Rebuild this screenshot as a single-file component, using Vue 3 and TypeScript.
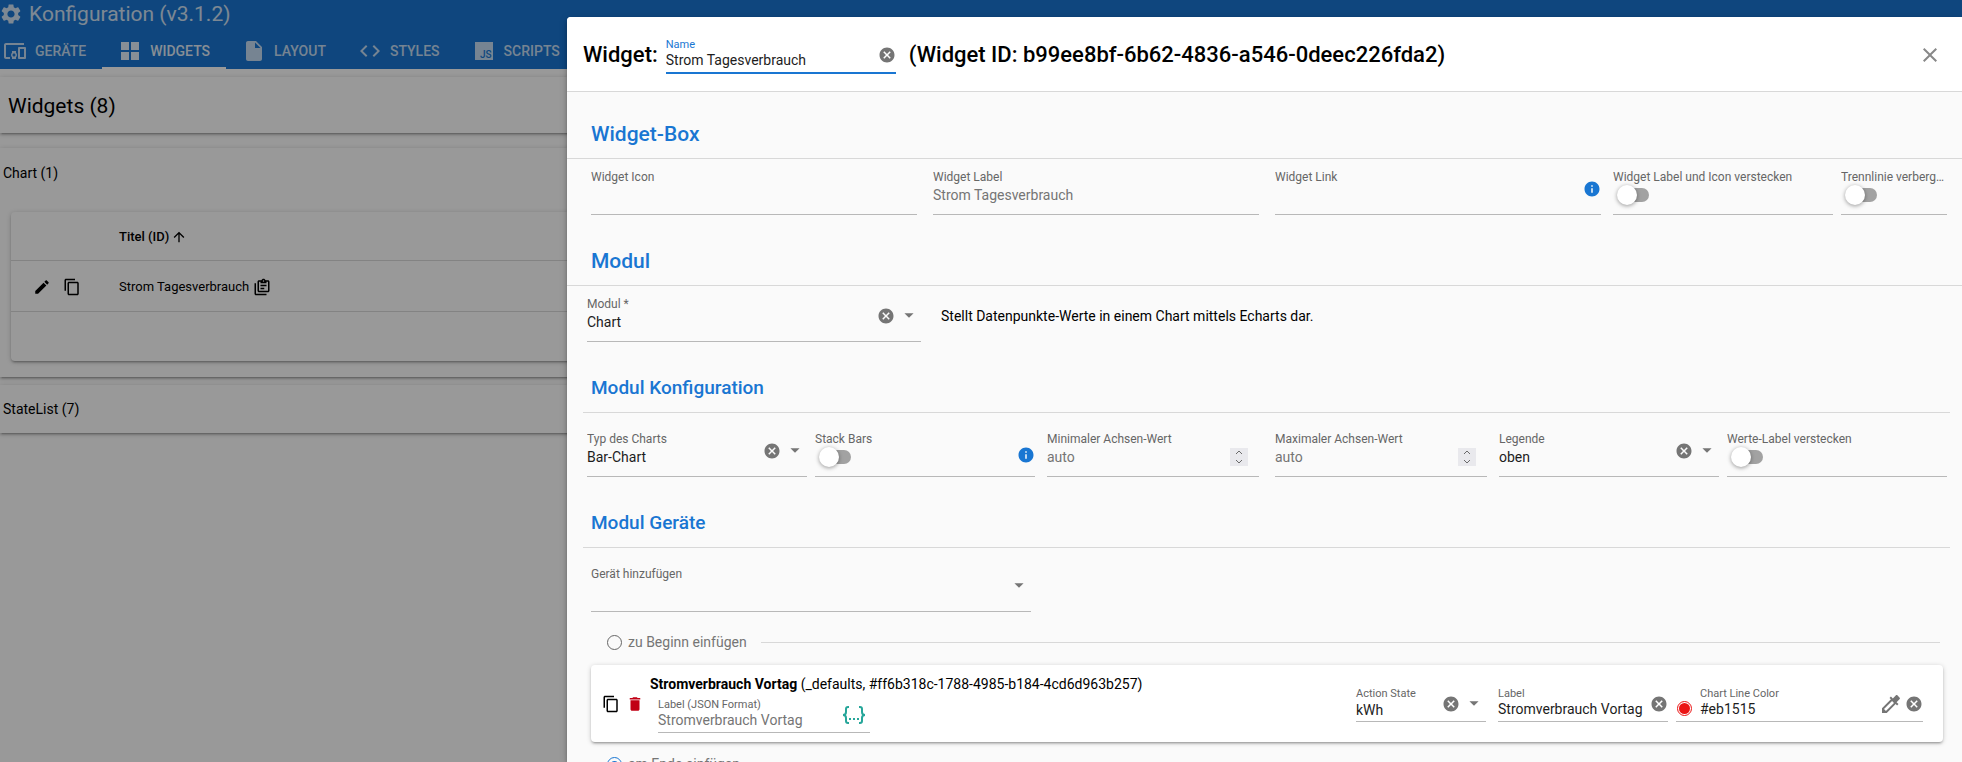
<script setup lang="ts">
import { ref } from 'vue'

const icons = {
  cog: 'M19.14 12.94c.04-.3.06-.61.06-.94 0-.32-.02-.64-.07-.94l2.03-1.58c.18-.14.23-.41.12-.61l-1.92-3.32c-.12-.22-.37-.29-.59-.22l-2.39.96c-.5-.38-1.03-.7-1.62-.94l-.36-2.54c-.04-.24-.24-.41-.48-.41h-3.84c-.24 0-.43.17-.47.41l-.36 2.54c-.59.24-1.13.57-1.62.94l-2.39-.96c-.22-.08-.47 0-.59.22L2.74 8.87c-.12.21-.08.47.12.61l2.03 1.58c-.05.3-.09.63-.09.94s.02.64.07.94l-2.03 1.58c-.18.14-.23.41-.12.61l1.92 3.32c.12.22.37.29.59.22l2.39-.96c.5.38 1.03.7 1.62.94l.36 2.54c.05.24.24.41.48.41h3.84c.24 0 .44-.17.47-.41l.36-2.54c.59-.24 1.13-.56 1.62-.94l2.39.96c.22.08.47 0 .59-.22l1.92-3.32c.12-.22.07-.47-.12-.61l-2.01-1.58zM12 15.6c-1.98 0-3.6-1.62-3.6-3.6s1.62-3.6 3.6-3.6 3.6 1.62 3.6 3.6-1.62 3.6-3.6 3.6z',
  devices: 'M3 6h18V4H3c-1.1 0-2 .9-2 2v12c0 1.1.9 2 2 2h4v-2H3V6zm10 6H9v1.78c-.61.55-1 1.33-1 2.22s.39 1.67 1 2.22V20h4v-1.78c.61-.55 1-1.34 1-2.22s-.39-1.67-1-2.22V12zm-2 5.5c-.83 0-1.5-.67-1.5-1.5s.67-1.5 1.5-1.5 1.5.67 1.5 1.5-.67 1.5-1.5 1.5zM22 8h-6c-.5 0-1 .5-1 1v10c0 .5.5 1 1 1h6c.5 0 1-.5 1-1V9c0-.5-.5-1-1-1zm-1 10h-4v-8h4v8z',
  grid: 'M3 3h8v8H3zm10 0h8v8h-8zM3 13h8v8H3zm10 0h8v8h-8z',
  file: 'M6 2c-1.1 0-2 .9-2 2v16c0 1.1.9 2 2 2h12c1.1 0 2-.9 2-2V8l-6-6zm7 7V3.5L18.5 9z',
  code: 'M9.4 16.6L4.8 12l4.6-4.6L8 6l-6 6 6 6zm5.2 0l4.6-4.6-4.6-4.6L16 6l6 6-6 6z',
  edit: 'M3 17.25V21h3.75L17.81 9.94l-3.75-3.75zM20.71 7.04c.39-.39.39-1.02 0-1.41l-2.34-2.34c-.39-.39-1.02-.39-1.41 0l-1.83 1.83 3.75 3.75z',
  copy: 'M16 1H4c-1.1 0-2 .9-2 2v14h2V3h12zm3 4H8c-1.1 0-2 .9-2 2v14c0 1.1.9 2 2 2h11c1.1 0 2-.9 2-2V7c0-1.1-.9-2-2-2m0 16H8V7h11z',
  trash: 'M6 19c0 1.1.9 2 2 2h8c1.1 0 2-.9 2-2V7H6zM19 4h-3.5l-1-1h-5l-1 1H5v2h14z',
  cancel: 'M12 2C6.47 2 2 6.47 2 12s4.47 10 10 10 10-4.47 10-10S17.53 2 12 2m5 13.59L15.59 17 12 13.41 8.41 17 7 15.59 10.59 12 7 8.41 8.41 7 12 10.59 15.59 7 17 8.41 13.41 12z',
  info: 'M12 2C6.48 2 2 6.48 2 12s4.48 10 10 10 10-4.48 10-10S17.52 2 12 2m1 15h-2v-6h2zm0-8h-2V7h2z',
  drop: 'M7 9l5 5 5-5z',
  up: 'M4 12l1.41 1.41L11 7.83V20h2V7.83l5.58 5.59L20 12l-8-8z',
  clipboard: 'M4 7V21H18V23H4C2.9 23 2 22.1 2 21V7H4M20 3C21.1 3 22 3.9 22 5V17C22 18.1 21.1 19 20 19H8C6.9 19 6 18.1 6 17V5C6 3.9 6.9 3 8 3H11.18C11.6 1.84 12.7 1 14 1C15.3 1 16.4 1.84 16.82 3H20M14 3C13.45 3 13 3.45 13 4C13 4.55 13.45 5 14 5C14.55 5 15 4.55 15 4C15 3.45 14.55 3 14 3M10 7V5H8V17H20V5H18V7M15 15H10V13H15M18 11H10V9H18V11Z',
  dropper: 'M20.71 5.63l-2.34-2.34c-.39-.39-1.02-.39-1.41 0l-3.12 3.12-1.93-1.91-1.41 1.41 1.42 1.42L3 16.25V21h4.75l8.92-8.92 1.42 1.42 1.41-1.41-1.92-1.92 3.12-3.12c.4-.4.4-1.03.01-1.42zM6.92 19L5 17.08l8.06-8.06 1.92 1.92L6.92 19z',
  close: 'M19 6.41L17.59 5 12 10.59 6.41 5 5 6.41 10.59 12 5 17.59 6.41 19 12 13.41 17.59 19 19 17.59 13.41 12z',
}

const tabs = [
  { label: 'Geräte', icon: icons.devices },
  { label: 'Widgets', icon: icons.grid, active: true },
  { label: 'Layout', icon: icons.file },
  { label: 'Styles', icon: icons.code },
  { label: 'Scripts', icon: null },
]

type Kind = 'text' | 'toggle' | 'number' | 'select'
interface Field {
  id: string
  label: string
  kind: Kind
  span: number
  info?: boolean
  placeholder?: string
  value?: string
}

const boxFields: Field[] = [
  { id: 'box-icon', label: 'Widget Icon', kind: 'text', span: 3 },
  { id: 'box-label', label: 'Widget Label', kind: 'text', span: 3, placeholder: 'Strom Tagesverbrauch' },
  { id: 'box-link', label: 'Widget Link', kind: 'text', span: 3, info: true },
  { id: 'box-hide', label: 'Widget Label und Icon verstecken', kind: 'toggle', span: 2 },
  { id: 'box-line', label: 'Trennlinie verbergen', kind: 'toggle', span: 1 },
]
const moduleFields: Field[] = [
  { id: 'module', label: 'Modul *', kind: 'select', span: 3, value: 'Chart' },
]
const configFields: Field[] = [
  { id: 'chart-type', label: 'Typ des Charts', kind: 'select', span: 2, value: 'Bar-Chart' },
  { id: 'stack', label: 'Stack Bars', kind: 'toggle', span: 2, info: true },
  { id: 'min', label: 'Minimaler Achsen-Wert', kind: 'number', span: 2, placeholder: 'auto' },
  { id: 'max', label: 'Maximaler Achsen-Wert', kind: 'number', span: 2, placeholder: 'auto' },
  { id: 'legend', label: 'Legende', kind: 'select', span: 2, value: 'oben' },
  { id: 'hide-values', label: 'Werte-Label verstecken', kind: 'toggle', span: 2 },
]
const sections = [
  { title: 'Widget-Box', fields: boxFields, cls: 'wide' },
  { title: 'Modul', fields: moduleFields, cls: 'wide', note: 'Stellt Datenpunkte-Werte in einem Chart mittels Echarts dar.' },
  { title: 'Modul Konfiguration', fields: configFields, cls: 'sub' },
]

const name = ref('Strom Tagesverbrauch')
const insertAt = ref('end')
</script>

<template>
  <div class="app">
    <div class="page">
      <header class="bar">
        <div class="brand">
          <svg class="cog" viewBox="2 2 20 20"><path :d="icons.cog" /></svg>
          <span>Konfiguration (v3.1.2)</span>
        </div>
        <nav class="tabs">
          <button v-for="t in tabs" :key="t.label" type="button" class="tab" :class="{ active: t.active }">
            <svg class="i24" viewBox="0 0 24 24">
              <path v-if="t.icon" :d="t.icon" />
              <template v-else>
                <rect x="3" y="3" width="18" height="18" />
                <text x="8" y="19" class="js">JS</text>
              </template>
            </svg>
            {{ t.label }}
          </button>
        </nav>
      </header>
      <main class="content">
        <section class="panel title"><h1>Widgets (8)</h1></section>
        <section class="panel group">
          <h2>Chart (1)</h2>
          <div class="tablebox">
            <table>
              <thead>
                <tr>
                  <th class="actions"></th>
                  <th><span class="cell">Titel (ID) <svg class="up" viewBox="3 3 18 18"><path :d="icons.up" /></svg></span></th>
                </tr>
              </thead>
              <tbody>
                <tr>
                  <td class="actions">
                    <span class="cell tools">
                      <button type="button" aria-label="Bearbeiten"><svg class="i18" viewBox="0 0 24 24"><path :d="icons.edit" /></svg></button>
                      <button type="button" aria-label="Kopieren"><svg class="i18" viewBox="0 0 24 24"><path :d="icons.copy" /></svg></button>
                    </span>
                  </td>
                  <td><span class="cell">Strom Tagesverbrauch <svg class="i18" viewBox="0 0 24 24"><path :d="icons.clipboard" /></svg></span></td>
                </tr>
              </tbody>
            </table>
          </div>
        </section>
        <section class="panel list"><h2>StateList (7)</h2></section>
      </main>
    </div>

    <div class="backdrop"></div>

    <div class="dialog" role="dialog" aria-label="Widget">
      <header class="head">
        <h2>Widget:</h2>
        <div class="dense focus name">
          <div class="main">
            <label for="name">Name</label>
            <input id="name" v-model="name" type="text" />
          </div>
          <button type="button" class="clear" aria-label="Leeren"><svg class="i18" viewBox="0 0 24 24"><path :d="icons.cancel" /></svg></button>
        </div>
        <h2 class="ident">(Widget ID: b99ee8bf-6b62-4836-a546-0deec226fda2)</h2>
        <button type="button" class="close" aria-label="Schließen"><svg class="i24" viewBox="0 0 24 24"><path :d="icons.close" /></svg></button>
      </header>

      <div class="body">
        <section v-for="s in sections" :key="s.title" :class="s.cls">
          <h3>{{ s.title }}</h3>
          <div class="row">
            <div v-for="f in s.fields" :key="f.id" class="col" :class="['span' + f.span, f.kind]">
              <div class="field">
                <div class="main">
                  <label :for="f.id">{{ f.label }}</label>
                  <input v-if="f.kind === 'text'" :id="f.id" type="text" :placeholder="f.placeholder" />
                  <input v-else-if="f.kind === 'number'" :id="f.id" type="number" :placeholder="f.placeholder" />
                  <select v-else-if="f.kind === 'select'" :id="f.id"><option>{{ f.value }}</option></select>
                  <input v-else :id="f.id" type="checkbox" class="switch" />
                </div>
                <div v-if="f.kind === 'number'" class="spin">
                  <button type="button" aria-label="Erhöhen"><svg viewBox="0 0 8 5"><path d="M1 4l3-3 3 3" /></svg></button>
                  <button type="button" aria-label="Verringern"><svg viewBox="0 0 8 5"><path d="M1 1l3 3 3-3" /></svg></button>
                </div>
                <template v-if="f.kind === 'select'">
                  <button type="button" class="clear" aria-label="Leeren"><svg class="i18" viewBox="0 0 24 24"><path :d="icons.cancel" /></svg></button>
                  <svg class="drop" viewBox="0 0 24 24"><path :d="icons.drop" /></svg>
                </template>
                <svg v-if="f.info" class="i18 info" viewBox="0 0 24 24"><path :d="icons.info" /></svg>
              </div>
            </div>
            <p v-if="s.note" class="note">{{ s.note }}</p>
          </div>
        </section>

        <section class="sub">
          <h3>Modul Geräte</h3>
          <div class="row">
            <div class="col span4 text">
              <div class="field">
                <div class="main">
                  <label for="device">Gerät hinzufügen</label>
                  <select id="device"><option></option></select>
                </div>
                <svg class="drop" viewBox="0 0 24 24"><path :d="icons.drop" /></svg>
              </div>
            </div>
          </div>
        </section>

        <div class="insert">
          <label><input v-model="insertAt" type="radio" name="insert" value="start" />zu Beginn einfügen</label>
          <hr />
        </div>

        <article class="device">
          <div class="devtools">
            <button type="button" aria-label="Kopieren"><svg class="i18" viewBox="0 0 24 24"><path :d="icons.copy" /></svg></button>
            <button type="button" class="del" aria-label="Löschen"><svg class="i18" viewBox="0 0 24 24"><path :d="icons.trash" /></svg></button>
          </div>
          <div class="devmain">
            <p><b>Stromverbrauch Vortag</b> (_defaults, #ff6b318c-1788-4985-b184-4cd6d963b257)</p>
            <div class="dense json">
              <div class="main">
                <label for="json">Label (JSON Format)</label>
                <input id="json" type="text" placeholder="Stromverbrauch Vortag" />
              </div>
              <svg class="braces" viewBox="0 0 26 20">
                <path d="M8 2H7Q5 2 5 4V7Q5 10 2 10Q5 10 5 13V16Q5 18 7 18H8M18 2H19Q21 2 21 4V7Q21 10 24 10Q21 10 21 13V16Q21 18 19 18H18" />
                <path class="dots" d="M8 14H10M12 14H14M16 14H18" />
              </svg>
            </div>
          </div>
          <div class="devfields">
            <div class="dense state">
              <div class="main">
                <label for="state">Action State</label>
                <select id="state"><option>kWh</option></select>
              </div>
              <button type="button" class="clear" aria-label="Leeren"><svg class="i18" viewBox="0 0 24 24"><path :d="icons.cancel" /></svg></button>
              <svg class="drop" viewBox="0 0 24 24"><path :d="icons.drop" /></svg>
            </div>
            <div class="dense devlabel">
              <div class="main">
                <label for="devlabel">Label</label>
                <input id="devlabel" type="text" value="Stromverbrauch Vortag" />
              </div>
              <button type="button" class="clear" aria-label="Leeren"><svg class="i18" viewBox="0 0 24 24"><path :d="icons.cancel" /></svg></button>
            </div>
            <div class="dense color">
              <span class="swatch"></span>
              <div class="main">
                <label for="color">Chart Line Color</label>
                <input id="color" type="text" value="#eb1515" />
              </div>
              <button type="button" class="clear pick" aria-label="Farbe wählen"><svg class="i24" viewBox="0 0 24 24"><path :d="icons.dropper" /></svg></button>
              <button type="button" class="clear" aria-label="Leeren"><svg class="i18" viewBox="0 0 24 24"><path :d="icons.cancel" /></svg></button>
            </div>
          </div>
        </article>

        <div class="insert last">
          <label><input v-model="insertAt" type="radio" name="insert" value="end" />am Ende einfügen</label>
          <hr />
        </div>
      </div>
    </div>
  </div>
</template>

<style>
body {
  margin: 0;
}
</style>

<style scoped>
* {
  box-sizing: border-box;
}
.app {
  position: relative;
  height: 100vh;
  overflow: hidden;
  background: #fff;
  color: #000;
  font: 14px/20px Roboto, 'Liberation Sans', sans-serif;
}
h1, h2, h3, p {
  margin: 0;
}
button {
  display: inline-flex;
  align-items: center;
  padding: 0;
  border: 0;
  background: none;
  color: inherit;
  font: inherit;
  cursor: pointer;
}
svg {
  display: block;
  flex: none;
  fill: currentColor;
}
.i24 {
  width: 24px;
  height: 24px;
}
.i18 {
  width: 18px;
  height: 18px;
}

/* page behind the dialog */
.bar {
  height: 69px;
  background: #1976d2;
  color: #fff;
}
.brand {
  display: flex;
  align-items: center;
  gap: 8px;
  height: 28px;
  padding-left: 1px;
  font-size: 21px;
  opacity: 0.8;
}
.cog {
  width: 20px;
  height: 20px;
}
.tabs {
  display: flex;
}
.tab {
  gap: 8px;
  height: 41px;
  padding: 7px 16px 0;
  border-bottom: 2px solid transparent;
  font-size: 14px;
  font-weight: 500;
  text-transform: uppercase;
  color: rgba(255, 255, 255, 0.75);
}
.tab:first-child {
  padding-left: 3px;
}
.tab.active {
  border-color: #fff;
  color: rgba(255, 255, 255, 0.88);
}
.js {
  font-size: 10px;
  font-weight: 500;
  fill: #1976d2;
}
.content {
  display: flex;
  flex-direction: column;
  padding-top: 8px;
}
.panel {
  box-shadow: 0 1px 5px rgba(0, 0, 0, 0.2), 0 2px 2px rgba(0, 0, 0, 0.14), 0 3px 1px -2px rgba(0, 0, 0, 0.12);
}
.panel h2 {
  font-size: 14px;
  font-weight: 400;
  line-height: 48px;
  padding-left: 3px;
}
.title {
  height: 56px;
  padding-left: 8px;
}
.title h1 {
  font-size: 21px;
  font-weight: 400;
  line-height: 58px;
}
.group {
  margin-top: 15px;
  padding-bottom: 16px;
}
.group h2 {
  line-height: 50px;
}
.list {
  margin-top: 8px;
}
.tablebox {
  margin: 14px 11px 0;
  height: 149px;
  border-radius: 4px;
  box-shadow: 0 1px 5px rgba(0, 0, 0, 0.2), 0 2px 2px rgba(0, 0, 0, 0.14), 0 3px 1px -2px rgba(0, 0, 0, 0.12);
}
table {
  width: 100%;
  border-collapse: collapse;
  font-size: 13px;
}
th, td {
  height: 51px;
  padding: 2px 16px 0;
  border-bottom: 1px solid rgba(0, 0, 0, 0.14);
  text-align: left;
}
th {
  height: 48px;
  font-size: 13px;
  font-weight: 500;
}
.actions {
  width: 92px;
  padding-left: 22px;
}
.cell {
  display: flex;
  align-items: center;
  gap: 4px;
}
.tools {
  gap: 12px;
}
.up {
  width: 12px;
  height: 12px;
}
.backdrop {
  position: absolute;
  inset: 0;
  background: rgba(0, 0, 0, 0.4);
}

/* dialog */
.dialog {
  position: absolute;
  top: 17px;
  left: 567px;
  right: 0;
  bottom: 0;
  overflow: hidden;
  border-radius: 4px 0 0 0;
  background: #fafafa;
  box-shadow: 0 2px 4px -1px rgba(0, 0, 0, 0.2), 0 4px 5px rgba(0, 0, 0, 0.14), 0 1px 10px rgba(0, 0, 0, 0.12);
}
.head {
  display: flex;
  align-items: center;
  height: 75px;
  padding: 2px 20px 0 16px;
  border-bottom: 1px solid #d8d8d8;
  background: #fff;
}
.head h2 {
  font-size: 22px;
  font-weight: 500;
  line-height: 24px;
}
.name {
  width: 230px;
  margin: 2px 13px 0 8px;
}
.close {
  margin-left: auto;
  color: #888;
}
.body h3 {
  display: flex;
  align-items: flex-end;
  height: 71px;
  padding: 0 24px 12px;
  border-bottom: 1px solid #d8d8d8;
  color: #1976d2;
  font-size: 21px;
  font-weight: 500;
  line-height: 24px;
}
.body section:first-child h3 {
  height: 67px;
}
.body .sub h3 {
  margin: 0 12px 8px 16px;
  padding: 0 8px 12px;
  font-size: 19px;
}
.row {
  display: grid;
  grid-template-columns: repeat(12, minmax(0, 1fr));
  padding: 0 11px 0 16px;
}
.col {
  padding: 0 4px;
}
.text, .number {
  padding: 0 8px;
}
.span1 { grid-column: span 1; }
.span2 { grid-column: span 2; }
.span3 { grid-column: span 3; }
.span4 { grid-column: span 4; }
.field {
  display: flex;
  align-items: center;
  height: 56px;
  padding-top: 4px;
  border-bottom: 1px solid #b8b8b8;
}
.main {
  display: flex;
  flex: 1;
  flex-direction: column;
  min-width: 0;
}
.field .main {
  align-self: flex-start;
  padding-top: 6px;
}
label {
  color: #666;
}
.field label {
  overflow: hidden;
  font-size: 12px;
  line-height: 16px;
  text-overflow: ellipsis;
  white-space: nowrap;
}
input, select {
  width: 100%;
  height: 20px;
  margin: 0;
  padding: 0;
  border: 0;
  outline: 0;
  background: none;
  color: #1d1d1d;
  font: inherit;
  appearance: none;
}
input::placeholder {
  color: #757575;
  opacity: 1;
}
input[type='number'] {
  appearance: textfield;
}
.clear {
  color: #757575;
}
.drop {
  width: 22px;
  height: 22px;
  margin: 0 1px 0 3px;
  color: #757575;
}
.info {
  color: #1976d2;
}
.toggle .info {
  margin-top: 8px;
}
.switch {
  display: flex;
  align-items: center;
  width: 32px;
  height: 20px;
  margin-left: 4px;
}
.switch::before {
  content: '';
  width: 20px;
  height: 20px;
  flex: none;
  border-radius: 50%;
  background: #fff;
  box-shadow: 0 1px 4px rgba(0, 0, 0, 0.4);
  z-index: 1;
}
.switch::after {
  content: '';
  width: 22px;
  height: 14px;
  margin-left: -10px;
  flex: none;
  border-radius: 0 7px 7px 0;
  background: #a2a2a2;
}
.spin {
  display: flex;
  flex-direction: column;
  justify-content: center;
  gap: 4px;
  width: 18px;
  height: 18px;
  margin: 12px 11px 0 0;
  background: #e9e9ed;
}
.spin button {
  justify-content: center;
}
.spin svg {
  width: 8px;
  height: 5px;
  fill: none;
  stroke: #6a6a6a;
}
.note {
  grid-column: span 9;
  align-self: center;
  padding: 4px 0 0 16px;
}

.insert {
  display: flex;
  align-items: center;
  gap: 14px;
  height: 44px;
  margin: 8px 22px 0 40px;
}
.insert.last {
  margin-top: 0;
}
.insert label {
  display: flex;
  align-items: center;
  gap: 6px;
  color: #757575;
}
.insert input {
  display: grid;
  place-items: center;
  width: 15px;
  height: 15px;
  border: 1px solid #666;
  border-radius: 50%;
}
.insert input:checked {
  border-color: #1976d2;
}
.insert input:checked::before {
  content: '';
  width: 7px;
  height: 7px;
  border-radius: 50%;
  background: #1976d2;
}
.insert hr {
  flex: 1;
  height: 1px;
  margin: 0;
  border: 0;
  background: #d8d8d8;
}

.device {
  display: flex;
  align-items: center;
  height: 77px;
  margin: 1px 19px 0 24px;
  padding: 0 20px 0 11px;
  border-radius: 4px;
  background: #fff;
  box-shadow: 0 1px 5px rgba(0, 0, 0, 0.2), 0 2px 2px rgba(0, 0, 0, 0.14), 0 3px 1px -2px rgba(0, 0, 0, 0.12);
}
.devtools {
  display: flex;
  gap: 6px;
}
.del {
  color: #c10015;
}
.devmain {
  padding-left: 6px;
}
.json {
  width: 212px;
  margin: 4px 0 0 8px;
}
.devfields {
  display: flex;
  padding-top: 2px;
  margin-left: auto;
}
.dense {
  display: flex;
  align-items: center;
  border-bottom: 1px solid #b8b8b8;
}
.dense .main {
  padding-bottom: 3px;
}
.dense label {
  font-size: 11px;
  line-height: 13px;
}
.dense input, .dense select {
  height: 18px;
}
.dense.focus {
  border-bottom: 2px solid #1976d2;
}
.focus label {
  color: #1976d2;
}
.braces {
  width: 26px;
  height: 20px;
  margin-right: 3px;
  fill: none;
  stroke: #26a69a;
  stroke-width: 2;
}
.state {
  width: 130px;
  margin-right: 12px;
}
.devlabel {
  width: 170px;
  margin-right: 8px;
}
.color {
  width: 247px;
}
.pick {
  margin-right: 2px;
}
.swatch {
  width: 15px;
  height: 15px;
  margin: 8px 8px 0 1px;
  padding: 1px;
  border: 1px solid #eb1515;
  border-radius: 50%;
  background: #eb1515 content-box;
}
</style>
